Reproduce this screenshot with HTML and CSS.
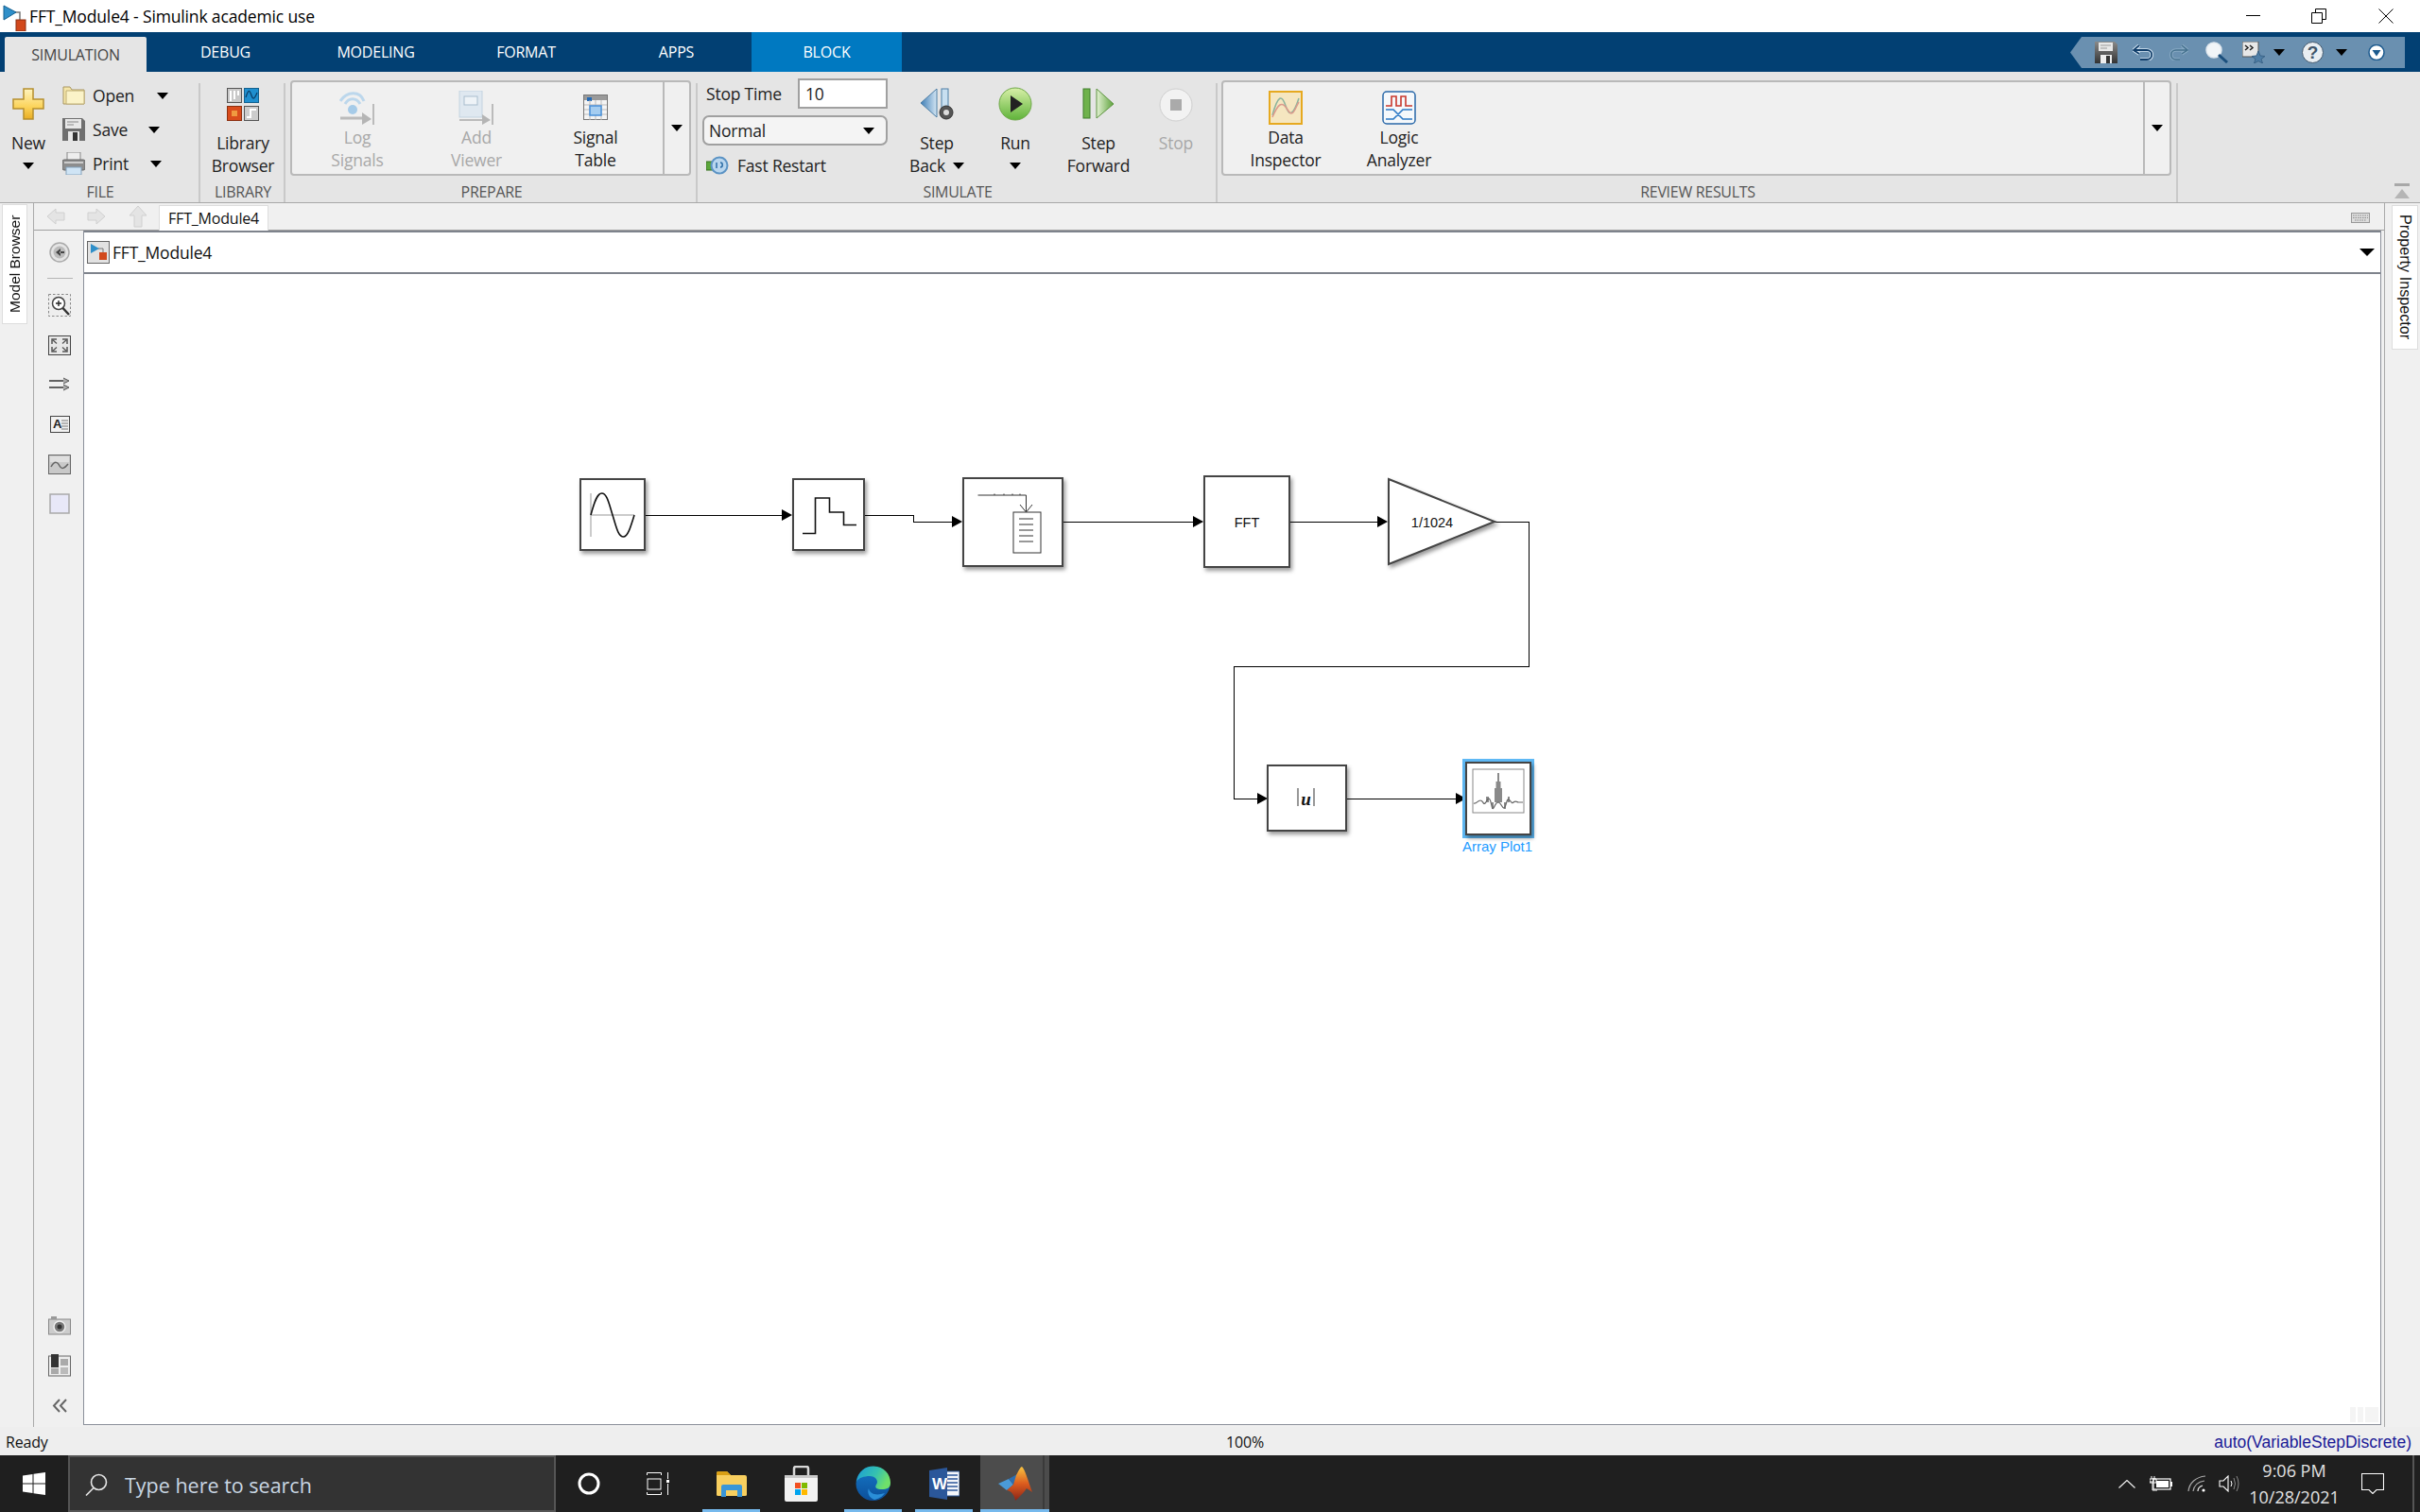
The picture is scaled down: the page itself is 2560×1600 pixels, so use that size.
FILE: index.html
```html
<!DOCTYPE html>
<html lang="en">
<head>
<meta charset="utf-8">
<title>FFT_Module4 - Simulink academic use</title>
<link rel="stylesheet" href="styles.css">
</head>
<body>
<div class="app">
  <header class="titlebar">
    <svg class="app-icon" width="26" height="28" viewBox="0 0 26 28"><path d="M8 8H19V16" fill="none" stroke="#777" stroke-width="1.5"/><path d="M2 1L15 8L2 16Z" fill="#2f8fc9" stroke="#17608f" stroke-width="1"/><rect x="15" y="16" width="10" height="12" fill="#d2491c" stroke="#8c2f10"/></svg>
    <span class="title-text">FFT_Module4 - Simulink academic use</span>
    <div class="winctl">
      <svg width="16" height="16" viewBox="0 0 16 16"><path d="M0 7.5H15" stroke="#000" stroke-width="1"/></svg>
      <svg class="restore" width="16" height="16" viewBox="0 0 16 16"><path d="M.5 4.5H11.5V15.5H.5ZM4.5 4V.5H15.5V11.5H12" fill="none" stroke="#000"/></svg>
      <svg class="close" width="16" height="16" viewBox="0 0 16 16"><path d="M.5.5L15.5 15.5M15.5.5L.5 15.5" stroke="#000"/></svg>
    </div>
  </header>

  <nav class="tabbar">
    <div class="tab active">SIMULATION</div>
    <div class="tab">DEBUG</div>
    <div class="tab">MODELING</div>
    <div class="tab">FORMAT</div>
    <div class="tab">APPS</div>
    <div class="tab block">BLOCK</div>
    <div class="quick">
      <svg width="24" height="23" viewBox="0 0 24 23"><defs><linearGradient id="fl" x1="0" y1="0" x2="0" y2="1"><stop offset="0" stop-color="#8a8a8a"/><stop offset="1" stop-color="#333"/></linearGradient></defs><path d="M0 0H21L24 3V23H0Z" fill="url(#fl)"/><rect x="4" y="1" width="15" height="9" fill="#e8e8e8"/><path d="M6 4H17M6 7H13" stroke="#999"/><rect x="6" y="14" width="12" height="9" fill="#eee"/><rect x="12" y="15" width="4" height="8" fill="#333"/></svg>
      <svg width="22" height="17" viewBox="0 0 22 17"><path d="M7 1L1 6L7 10M1 6H15C22 6 22 16 15 16H8" fill="none" stroke="#d8e8f5" stroke-width="3.6"/><path d="M7 1L1 6L7 10M1 6H15C22 6 22 16 15 16H8" fill="none" stroke="#123f6b" stroke-width="1.8"/></svg>
      <svg width="21" height="17" viewBox="0 0 21 17"><path d="M14 1L20 6L14 10M20 6H8C1 6 1 16 8 16H12" fill="none" stroke="#88a9c3" stroke-width="3.6"/><path d="M14 1L20 6L14 10M20 6H8C1 6 1 16 8 16H12" fill="none" stroke="#46728f" stroke-width="1.5"/></svg>
      <svg class="q-search" width="24" height="23" viewBox="0 0 24 23"><circle cx="9" cy="9" r="8" fill="#f1f5f8" stroke="#dfe7ee" stroke-width="1.5"/><path d="M14 14L23 22" stroke="#1b4f7c" stroke-width="3"/></svg>
      <svg class="q-short" width="24" height="23" viewBox="0 0 24 23"><rect x="0" y="0" width="17" height="16" fill="#e8e8e8" stroke="#555"/><path d="M3 4L6 6.5L3 9M8 4L11 6.5L8 9" fill="none" stroke="#222" stroke-width="1.5"/><path d="M17 10L19 15L24 15.5L20 18.5L21.5 23L17 20.5L12.5 23L14 18.5L10 15.5L15 15Z" fill="#4f7ea6" stroke="#3a6387"/></svg>
      <span class="caret q-c1"></span>
      <svg class="q-help" width="23" height="23" viewBox="0 0 23 23"><circle cx="11.5" cy="11.5" r="11" fill="#e9eef2" stroke="#40566b"/><text class="help-q" x="11.5" y="18">?</text></svg>
      <span class="caret q-c2"></span>
      <svg class="q-down" width="18" height="17" viewBox="0 0 18 17"><circle cx="9" cy="8.5" r="8" fill="#fff" stroke="#1c5a8e" stroke-width="1.5"/><path d="M4.5 6H13.5L9 12.5Z" fill="#1c5a8e"/></svg>
    </div>
  </nav>

  <section class="ribbon">
    <div class="group g-file">
      <div class="group-body">
        <div class="tool t-new">
          <div class="tool-icon"><svg width="34" height="34" viewBox="0 0 34 34"><defs><linearGradient id="pl" x1="0" y1="0" x2="0" y2="1"><stop offset="0" stop-color="#fff4bf"/><stop offset=".6" stop-color="#fbd35a"/><stop offset="1" stop-color="#e9ad24"/></linearGradient></defs><path d="M12 1H22V12H33V22H22V33H12V22H1V12H12Z" fill="url(#pl)" stroke="#b58f2e" stroke-width="1.5"/></svg></div>
          <div class="tool-line">New</div>
          <div class="tool-line"><span class="caret"></span></div>
        </div>
        <div class="file-list">
          <div class="file-row r-open"><svg width="24" height="20" viewBox="0 0 24 20"><path d="M1 1H8L10 4H23V19H1Z" fill="#f5e6a9" stroke="#a89560"/><path d="M4 5H23V19H4Z" fill="#fbf3c8" stroke="#bfae74"/></svg><span>Open</span><span class="caret"></span></div>
          <div class="file-row r-save"><svg width="24" height="24" viewBox="0 0 24 24"><path d="M0 0H21L24 3V24H0Z" fill="#6f6f6f"/><rect x="3" y="1" width="17" height="10" fill="#e8e8e8"/><path d="M5 4H17M5 7H12" stroke="#888"/><rect x="6" y="14" width="12" height="10" fill="#e8e8e8"/><rect x="11" y="15" width="5" height="9" fill="#333"/></svg><span>Save</span><span class="caret"></span></div>
          <div class="file-row r-print"><svg width="24" height="24" viewBox="0 0 24 24"><rect x="5" y="0" width="14" height="9" fill="#eee" stroke="#888"/><rect x="0" y="8" width="24" height="11" rx="2" fill="#8d8d8d" stroke="#666"/><rect x="2" y="10" width="20" height="2" fill="#ccc"/><rect x="4" y="16" width="16" height="8" fill="#cfe4f5" stroke="#86a4bd"/></svg><span>Print</span><span class="caret"></span></div>
        </div>
      </div>
      <div class="group-label">FILE</div>
    </div>

    <div class="group g-lib">
      <div class="group-body center">
        <div class="tool">
          <div class="tool-icon"><svg width="34" height="35" viewBox="0 0 34 35"><rect x=".5" y=".5" width="15" height="15" fill="#c8c8c8" stroke="#555"/><path d="M4 14V3M8 12V3M12 8V3" stroke="#fff" stroke-width="2"/><rect x="18.5" y=".5" width="15" height="15" fill="#1f8fcf" stroke="#14618e"/><path d="M20 10C23 1 24 2 26 8S30 10 32 5" fill="none" stroke="#0b3d66" stroke-width="1.2"/><rect x=".5" y="19.5" width="15" height="15" fill="#d94c1c" stroke="#8c2f10"/><rect x="5" y="24" width="6" height="6" fill="#f09a40"/><rect x="18.5" y="19.5" width="15" height="15" fill="#ccc" stroke="#555"/><path d="M21 31H25V23H31" fill="none" stroke="#fff" stroke-width="2"/></svg></div>
          <div class="tool-line">Library</div>
          <div class="tool-line">Browser</div>
        </div>
      </div>
      <div class="group-label">LIBRARY</div>
    </div>

    <div class="group g-prep">
      <div class="gallery gal-prep">
        <div class="gal-items">
          <div class="gtool disabled">
            <div class="gtool-icon"><svg width="38" height="36" viewBox="0 0 38 36"><path d="M1 11C8 0 22 0 26 11M6 14C10 7 18 7 22 14" fill="none" stroke="#bcd7ec" stroke-width="3"/><circle cx="14" cy="20" r="5" fill="#a6cbe8"/><path d="M1 29H25" stroke="#bbb" stroke-width="3"/><path d="M24 23L34 30L24 36Z" fill="#b5b5b5"/><path d="M36 14V36" stroke="#bbb" stroke-width="2"/></svg></div>
            <div class="tool-line">Log</div><div class="tool-line">Signals</div>
          </div>
          <div class="gtool disabled">
            <div class="gtool-icon"><svg width="38" height="36" viewBox="0 0 38 36"><rect x="1" y="0" width="24" height="28" fill="#dfe8f0" stroke="#c3d3e0"/><rect x="6" y="6" width="14" height="9" fill="#eef3f7" stroke="#a9bdcd"/><path d="M1 31H27" stroke="#bbb" stroke-width="2"/><path d="M25 25L34 31L25 36Z" fill="#b5b5b5"/><path d="M36 14V36" stroke="#bbb" stroke-width="2"/></svg></div>
            <div class="tool-line">Add</div><div class="tool-line">Viewer</div>
          </div>
          <div class="gtool">
            <div class="gtool-icon st-icon"><svg width="26" height="28" viewBox="0 0 26 28"><rect x=".5" y=".5" width="25" height="26" fill="#f4f4f4" stroke="#777"/><rect x="1" y="1" width="24" height="5" fill="#9a9a9a"/><rect x="4" y="3" width="5" height="4" fill="#2369b5"/><path d="M1 11H25M1 16H25M1 21H25M7 6V27M13 6V27M19 6V27" stroke="#bbb"/><rect x="7" y="12" width="12" height="10" fill="#a5cdf0" stroke="#4a90d9" stroke-width="1.5"/></svg></div>
            <div class="tool-line">Signal</div><div class="tool-line">Table</div>
          </div>
        </div>
        <div class="gal-more"><span class="caret"></span></div>
      </div>
      <div class="group-label">PREPARE</div>
    </div>

    <div class="group g-sim">
      <div class="group-body">
        <div class="sim-form">
          <div class="stop-row"><span>Stop Time</span><div class="stop-input">10</div></div>
          <div class="mode-select"><span>Normal</span><span class="caret"></span></div>
          <div class="fast-row"><svg width="24" height="20" viewBox="0 0 24 20"><rect x="0" y="6" width="8" height="9" fill="#5ba63a" stroke="#35701f"/><circle cx="14" cy="10" r="8.5" fill="#b9d6ee" stroke="#5b93c4" stroke-width="2"/><path d="M11 7V13M15 7C18 7 18 12 15 12" fill="none" stroke="#2e6ea6" stroke-width="1.5"/></svg><span>Fast Restart</span></div>
        </div>
        <div class="tool t-sb">
          <div class="tool-icon"><svg width="36" height="34" viewBox="0 0 36 34"><defs><linearGradient id="sb" x1="0" y1="0" x2="1" y2="0"><stop offset="0" stop-color="#3e7eb6"/><stop offset="1" stop-color="#d3e5f3"/></linearGradient></defs><path d="M18 1V31L1 16Z" fill="url(#sb)" stroke="#4d7ea5"/><rect x="23" y="1" width="7" height="27" fill="#c8dff0" stroke="#4d7ea5"/><circle cx="28" cy="26" r="7" fill="#555" stroke="#333"/><circle cx="28" cy="26" r="3" fill="#ddd"/></svg></div>
          <div class="tool-line">Step</div>
          <div class="tool-line back-line">Back<span class="caret"></span></div>
        </div>
        <div class="tool t-run">
          <div class="tool-icon run-i"><svg width="36" height="36" viewBox="0 0 36 36"><defs><linearGradient id="rn" x1="0" y1="0" x2="0" y2="1"><stop offset="0" stop-color="#d8f0a8"/><stop offset="1" stop-color="#5fb33a"/></linearGradient></defs><circle cx="18" cy="18" r="17" fill="url(#rn)" stroke="#6fa84a"/><path d="M13 9L26 18L13 27Z" fill="#222"/></svg></div>
          <div class="tool-line">Run</div>
          <div class="tool-line"><span class="caret"></span></div>
        </div>
        <div class="tool t-sf">
          <div class="tool-icon"><svg width="34" height="33" viewBox="0 0 34 33"><defs><linearGradient id="sf" x1="0" y1="0" x2="1" y2="0"><stop offset="0" stop-color="#e4f2d4"/><stop offset="1" stop-color="#5ea33c"/></linearGradient></defs><rect x="1" y="1" width="7" height="31" fill="#6fb24c" stroke="#3f7f2b"/><path d="M15 1L33 17L15 32Z" fill="url(#sf)" stroke="#5d9340"/></svg></div>
          <div class="tool-line">Step</div>
          <div class="tool-line">Forward</div>
        </div>
        <div class="tool t-stop disabled">
          <div class="tool-icon"><svg width="36" height="36" viewBox="0 0 36 36"><circle cx="18" cy="18" r="17" fill="#f2f2f2" stroke="#cfcfcf"/><rect x="12" y="12" width="12" height="12" fill="#aaa"/></svg></div>
          <div class="tool-line">Stop</div>
        </div>
      </div>
      <div class="group-label">SIMULATE</div>
    </div>

    <div class="group g-rev">
      <div class="gallery gal-rev">
        <div class="gal-items">
          <div class="gtool rtool">
            <div class="gtool-icon"><svg width="36" height="36" viewBox="0 0 36 36"><rect x="1" y="1" width="34" height="34" fill="#f5e6c0" stroke="#e6a920" stroke-width="2"/><path d="M4 26C10 4 14 4 18 16S26 26 32 8" fill="none" stroke="#8bb39c" stroke-width="1.5"/><path d="M4 28C10 14 14 10 20 20S28 18 32 12" fill="none" stroke="#dc9a8c" stroke-width="1.5"/></svg></div>
            <div class="tool-line">Data</div><div class="tool-line">Inspector</div>
          </div>
          <div class="gtool rtool">
            <div class="gtool-icon"><svg width="36" height="36" viewBox="0 0 36 36"><rect x="1" y="1" width="34" height="34" rx="4" fill="#f5f8fb" stroke="#2867a8" stroke-width="1.5"/><path d="M4 16H10V6H15V16H20V6H25V16H32" fill="none" stroke="#c8372d" stroke-width="1.6"/><path d="M4 20H12L22 30H32M4 30H12L22 20H32" fill="none" stroke="#2b78c5" stroke-width="1.6"/></svg></div>
            <div class="tool-line">Logic</div><div class="tool-line">Analyzer</div>
          </div>
        </div>
        <div class="gal-more"><span class="caret"></span></div>
      </div>
      <div class="group-label">REVIEW RESULTS</div>
    </div>

    <div class="ribbon-rest">
      <svg width="16" height="16" viewBox="0 0 16 16"><rect y="0" width="16" height="3" fill="#a8a8a8"/><path d="M0 16L8 6L16 16Z" fill="#b5b5b5"/></svg>
    </div>
  </section>

  <main class="workspace">
    <aside class="dock-left"><div class="side-tab model-tab">Model Browser</div></aside>
    <div class="main">
      <div class="tabstrip">
        <svg class="nav-a" width="20" height="20" viewBox="0 0 20 20"><path d="M1 10L10 2V6H19V14H10V18Z" fill="#e4e4e4" stroke="#d0d0d0"/></svg>
        <svg class="nav-b" width="20" height="20" viewBox="0 0 20 20"><path d="M19 10L10 2V6H1V14H10V18Z" fill="#e4e4e4" stroke="#d0d0d0"/></svg>
        <svg class="nav-c" width="20" height="24" viewBox="0 0 20 24"><path d="M10 1L19 11H14V23H6V11H1Z" fill="#e4e4e4" stroke="#d0d0d0"/></svg>
        <div class="model-tabitem">FFT_Module4</div>
        <svg class="kbd" width="20" height="11" viewBox="0 0 20 11"><rect x=".5" y=".5" width="19" height="10" fill="#ddd" stroke="#999"/><path d="M2 3H18M2 5.5H18M4 8H16" stroke="#8a8a8a" stroke-dasharray="1.5 1"/></svg>
      </div>
      <div class="editor">
        <div class="toolcol">
          <div class="slot"><svg width="22" height="22" viewBox="0 0 22 22"><circle cx="11" cy="11" r="10" fill="#e4e4e4" stroke="#aaa" stroke-width="1.5"/><circle cx="11" cy="11" r="6.5" fill="#bbb"/><path d="M12 7L7 11L12 15ZM11 10H16V12H11Z" fill="#444"/></svg></div>
          <div class="sep"></div>
          <div class="slot"><svg width="24" height="24" viewBox="0 0 24 24"><rect x=".5" y=".5" width="23" height="23" fill="#eee" stroke="#888" stroke-dasharray="2.5 2"/><circle cx="11" cy="10" r="6.5" fill="#fff" stroke="#444" stroke-width="1.5"/><path d="M8 10H14M11 7V13" stroke="#222" stroke-width="1.4"/><path d="M15.5 15L22 22" stroke="#333" stroke-width="2.5"/></svg></div>
          <div class="slot"><svg width="24" height="21" viewBox="0 0 24 21"><rect x=".5" y=".5" width="23" height="20" fill="#e8e8e8" stroke="#444"/><path d="M4 9V4H9M15 4H20V9M4 12V17H9M15 17H20V12" fill="none" stroke="#555" stroke-width="1.5"/><path d="M4.5 4.5L9 8.5M19.5 4.5L15 8.5M4.5 16.5L9 12.5M19.5 16.5L15 12.5" stroke="#555" stroke-width="1.3"/></svg></div>
          <div class="slot"><svg width="22" height="16" viewBox="0 0 22 16"><path d="M0 4H17M0 11H17" stroke="#333" stroke-width="1.5"/><path d="M15 1L21 4L15 7M15 8L21 11L15 14" fill="#aaa" stroke="#555"/></svg></div>
          <div class="slot"><svg width="21" height="18" viewBox="0 0 21 18"><rect x=".5" y=".5" width="20" height="17" fill="#f2f2f2" stroke="#444"/><text class="a-txt" x="3" y="13">A</text><path d="M12 5H19M12 8H19M12 11H19M12 14H19" stroke="#777"/></svg></div>
          <div class="slot"><svg width="24" height="21" viewBox="0 0 24 21"><rect x=".5" y=".5" width="23" height="20" fill="#c9c9c9" stroke="#666"/><rect x="2" y="2" width="20" height="6" fill="#dfdfdf"/><path d="M3 13C7 6 10 8 12 12S17 15 21 10" fill="none" stroke="#666" stroke-width="1.5"/></svg></div>
          <div class="slot"><svg width="22" height="22" viewBox="0 0 22 22"><rect x="1" y="1" width="20" height="20" fill="#e8e8f8" stroke="#a9a9a9" stroke-width="1.5"/></svg></div>
          <div class="slot slot-push"><svg width="24" height="20" viewBox="0 0 24 20"><rect x=".5" y="3" width="23" height="16" fill="#ccc" stroke="#888"/><rect x="3" y="0" width="6" height="3" fill="#999"/><circle cx="12" cy="11" r="6" fill="#777" stroke="#eee" stroke-width="1.5"/><circle cx="12" cy="11" r="2.5" fill="#333"/></svg></div>
          <div class="slot"><svg width="24" height="24" viewBox="0 0 24 24"><rect x=".5" y="2" width="23" height="21" fill="#eee" stroke="#666"/><rect x="3" y="0" width="8" height="14" fill="#333"/><rect x="13" y="5" width="8" height="7" fill="#aaa"/><rect x="13" y="14" width="8" height="7" fill="#bbb"/><rect x="3" y="15" width="8" height="6" fill="#aaa"/></svg></div>
          <div class="slot"><svg width="16" height="15" viewBox="0 0 16 15"><path d="M8 1L2 7.5L8 14M15 1L9 7.5L15 14" fill="none" stroke="#666" stroke-width="2"/></svg></div>
        </div>
        <div class="viewport">
          <div class="breadcrumb">
            <svg class="crumb-icon" width="24" height="24" viewBox="0 0 24 24"><rect x=".5" y=".5" width="23" height="23" fill="#e2e2e2" stroke="#666"/><path d="M4 3L13 8L4 13Z" fill="#2f8fc9"/><path d="M12 8H17V12" fill="none" stroke="#777"/><rect x="13" y="12" width="8" height="8" fill="#d2491c"/></svg>
            <span class="crumb-text">FFT_Module4</span>
            <span class="caret crumb-caret"></span>
          </div>
          <div class="canvas">
            <svg class="diagram" width="2430" height="1218" viewBox="89 290 2430 1218">
              <g class="wires">
                <path d="M682 545H830M915 545H966V552H1010M1124 552H1265M1364 552H1460M1581 552H1617V705H1305V845H1333M1425 845H1543"/>
              </g>
              <g class="heads">
                <path d="M827 539L838 545L827 551ZM1007 546L1018 552L1007 558ZM1262 546L1273 552L1262 558ZM1457 546L1468 552L1457 558ZM1330 839L1341 845L1330 851ZM1540 839L1551 845L1540 851Z"/>
              </g>
              <rect class="blk" x="614" y="507" width="68" height="75"/>
              <rect class="blk" x="839" y="507" width="75" height="75"/>
              <rect class="blk" x="1019" y="506" width="105" height="93"/>
              <rect class="blk" x="1274" y="504" width="90" height="96"/>
              <path class="blk" d="M1469 507L1581 552L1469 597Z"/>
              <rect class="blk" x="1341" y="810" width="83" height="69"/>
              <rect class="sel" x="1547" y="803" width="76" height="84"/>
              <rect class="blk" x="1551" y="807" width="68" height="76"/>

              <path class="axis" d="M625 522V568M625 545H671"/>
              <path class="ink" d="M625 545C629 530 632 522 636.5 522C642 522 644 532 648 545C652 558 654 568 659.5 568C664 568 667 558 671 545"/>
              <path class="ink" d="M849 564.5H862.5V527H877.5V542H892.5V555.5H906"/>
              <path class="thin" d="M1034.5 524H1085.5V541M1079 534L1085.5 542L1092 534M1052 522.5V524M1062 522.5V524M1071 522.5V524M1079 522.5V524"/>
              <rect class="thin doc" x="1072" y="542" width="29" height="43"/>
              <path class="thin" d="M1078 549H1093M1078 555H1093M1078 561H1093M1078 567H1093M1078 573H1093"/>
              <text class="lbl" x="1319" y="558">FFT</text>
              <text class="lbl" x="1515" y="558">1/1024</text>
              <path class="thin" d="M1373 834V853M1390 834V853"/>
              <text class="abs-u" x="1381.5" y="852">u</text>
              <rect class="frame" x="1558" y="814" width="54" height="46"/>
              <path class="peak" d="M1581 849V834H1582.5V827H1584V818H1586V827H1587.5V834H1589V849Z"/>
              <path class="peak" d="M1572 849V843H1575V849ZM1595 849V843H1597V849ZM1578 849V856H1580V849ZM1591 849V856H1593V849Z"/>
              <path class="ripple" d="M1559 850C1562 851 1563 847 1566 847S1569 852 1571 850S1574 843 1576 846S1578 858 1580 855S1582 849 1585 849S1590 858 1592 854S1594 845 1596 846S1599 851 1601 849S1604 848 1606 849H1611"/>
              <text class="sel-lbl" x="1584" y="901">Array Plot1</text>
            </svg>
            <div class="corner-marks"><span></span><span></span><span class="wide"></span></div>
          </div>
        </div>
      </div>
    </div>
    <aside class="dock-right"><div class="side-tab prop-tab">Property Inspector</div></aside>
  </main>

  <footer class="status">
    <span class="st-ready">Ready</span>
    <span class="st-zoom">100%</span>
    <span class="st-solver">auto(VariableStepDiscrete)</span>
  </footer>

  <div class="taskbar">
    <div class="start"><svg width="24" height="24" viewBox="0 0 24 24"><path d="M0 3.5L10.5 2V11.5H0ZM11.5 1.8L24 0V11.5H11.5ZM0 12.5H10.5V22L0 20.5ZM11.5 12.5H24V24L11.5 22.2Z" fill="#fff"/></svg></div>
    <div class="searchbox">
      <svg width="24" height="24" viewBox="0 0 24 24"><circle cx="14.5" cy="9.5" r="8" fill="none" stroke="#e6e6e6" stroke-width="1.6"/><path d="M9 15.5L1 23.5" stroke="#e6e6e6" stroke-width="1.6"/></svg>
      <span>Type here to search</span>
    </div>
    <div class="tb-sys tb-cortana"><svg width="24" height="24" viewBox="0 0 24 24"><circle cx="12" cy="12" r="10" fill="none" stroke="#fff" stroke-width="3"/></svg></div>
    <div class="tb-sys tb-view"><svg width="24" height="24" viewBox="0 0 24 24"><path d="M.5 3V.5H15.5V3M.5 21V23.5H15.5V21" fill="none" stroke="#fff" stroke-width="1"/><rect x="1" y="7" width="14" height="11" fill="none" stroke="#fff"/><path d="M22.5 0V7M22.5 12V24" stroke="#fff"/><rect x="21" y="8" width="3" height="3" fill="#fff"/></svg></div>
    <div class="tb t-exp on"><svg width="32" height="27" viewBox="0 0 32 27"><path d="M0 2Q0 0 2 0H11L15 4H30Q32 4 32 6V25Q32 26 30 26H2Q0 26 0 25Z" fill="#f8cf5f"/><path d="M0 2Q0 0 2 0H11L15 4H0Z" fill="#d99f14"/><path d="M5 27V16Q5 14 7 14H25Q27 14 27 16V27H22V20H10V27Z" fill="#3a96d8"/></svg></div>
    <div class="tb t-store"><svg width="35" height="38" viewBox="0 0 35 38"><path d="M10 12V3Q10 1 12 1H23Q25 1 25 3V12" fill="none" stroke="#d8d8d8" stroke-width="2.5"/><path d="M0 10H35V36Q35 38 33 38H2Q0 38 0 36Z" fill="#f2f2f2"/><rect y="10" width="35" height="3" fill="#c9c9c9"/><rect x="11" y="18" width="6" height="6" fill="#f25022"/><rect x="18" y="18" width="6" height="6" fill="#7fba00"/><rect x="11" y="25" width="6" height="6" fill="#00a4ef"/><rect x="18" y="25" width="6" height="6" fill="#ffb900"/></svg></div>
    <div class="tb t-edge on"><svg width="37" height="38" viewBox="0 0 37 38"><defs><linearGradient id="eg" x1="0" y1="0" x2="1" y2=".4"><stop offset="0" stop-color="#1a9cd8"/><stop offset=".6" stop-color="#35c1b0"/><stop offset="1" stop-color="#6fe06a"/></linearGradient><linearGradient id="eb" x1="0" y1="0" x2="0" y2="1"><stop offset="0" stop-color="#1578c8"/><stop offset="1" stop-color="#0c4f9a"/></linearGradient></defs><circle cx="18.500" cy="19" r="18" fill="url(#eb)"/><path d="M1 17C3 6 10 .5 19 .5C30 .5 37 9 37 18C37 24 33 25 28 25C22 25 20 23 22 20C25 16 21 11 15 11C9 11 3 13 1 17Z" fill="url(#eg)"/><path d="M14 24C15 30 22 32 31 29C27 35 20 36 20 36C14 34 12 28 14 24Z" fill="#2a8ed8"/></svg></div>
    <div class="tb t-word on"><svg width="32" height="34" viewBox="0 0 32 34"><rect x="14" y="4" width="18" height="26" fill="#f4f6fa"/><path d="M17 8H30M17 12H30M17 16H30M17 20H30M17 24H30" stroke="#2b579a" stroke-width="1.5"/><rect x="14" y="4" width="18" height="26" fill="none" stroke="#2b579a"/><path d="M0 3L19 0V34L0 31Z" fill="#2b579a"/><text class="w-txt" x="3" y="23">W</text></svg></div>
    <div class="tb t-mat on active-app"><svg width="36" height="36" viewBox="0 0 36 36"><defs><linearGradient id="mt" x1="0" y1="0" x2="0" y2="1"><stop offset="0" stop-color="#f9c440"/><stop offset=".5" stop-color="#dc5c1e"/><stop offset="1" stop-color="#8a2418"/></linearGradient></defs><path d="M0 18L11 13L16 19L9 25Z" fill="#4a9ad8"/><path d="M11 13L20 8L16 19Z" fill="#2c6eb0"/><path d="M19 9C22 3 24 0 25 0C28 2 32 16 36 27L30 23C28 26 22 33 18 36C17 30 14 26 9 25L16 19Z" fill="url(#mt)"/></svg><i class="split"></i></div>
    <div class="tray">
      <svg class="tr-chev" width="18" height="9" viewBox="0 0 18 9"><path d="M.5 8.500L9 .5L17.500 8.500" fill="none" stroke="#eee" stroke-width="1.2"/></svg>
      <svg class="tr-bat" width="24" height="16" viewBox="0 0 24 16"><rect x="4" y="3" width="18" height="11" fill="none" stroke="#fff" stroke-width="1.2"/><rect x="7" y="5" width="13" height="7" fill="#fff"/><rect x="22" y="6" width="2" height="5" fill="#fff"/><path d="M0 6H4V2M2 0V3M5 0V3M0 3H7V7H0ZM3 7V15H8" fill="none" stroke="#fff"/></svg>
      <svg class="tr-wifi" width="20" height="18" viewBox="0 0 20 18"><path d="M1 17C2 8 9 2 19 1M6 17C7 11 11 7 18 6" fill="none" stroke="#aaa" stroke-width="1.2"/><path d="M11 17C11 14 13 12 16 11" fill="none" stroke="#eee" stroke-width="1.2"/><circle cx="17" cy="16" r="1.6" fill="#fff"/></svg>
      <svg class="tr-vol" width="22" height="18" viewBox="0 0 22 18"><path d="M1 6H5L10 1V17L5 12H1Z" fill="none" stroke="#fff" stroke-width="1.1"/><path d="M13 6Q15 9 13 12" fill="none" stroke="#fff"/><path d="M16 3Q19 9 16 15M19 1Q23 9 19 17" fill="none" stroke="#888"/></svg>
      <div class="clock"><div>9:06 PM</div><div>10/28/2021</div></div>
      <svg class="tr-note" width="24" height="22" viewBox="0 0 24 22"><path d="M.5.5H23.500V17.500H16L12 21.500L8 17.500H.5Z" fill="none" stroke="#fff" stroke-width="1.100"/></svg>
      <i class="show-desk"></i>
    </div>
  </div>
</div>
</body>
</html>
```

FILE: styles.css
```css
* { box-sizing: border-box; }
html, body { margin: 0; padding: 0; }
body { width: 2560px; height: 1600px; overflow: hidden; background: #f0f0f0; color: #222; font-family: "Open Sans", "Noto Sans", sans-serif; font-size: 16px; }
svg { display: block; flex: none; }
.app { display: flex; flex-direction: column; width: 2560px; height: 1600px; }
.caret { display: inline-block; width: 0; height: 0; border-left: 6px solid transparent; border-right: 6px solid transparent; border-top: 7px solid #000; flex: none; }

/* title bar */
.titlebar { height: 34px; background: #fff; display: flex; align-items: center; padding-left: 2px; flex: none; }
.app-icon { margin-top: 4px; }
.title-text { margin-left: 3px; font-size: 17.5px; color: #000; letter-spacing: -0.15px; }
.winctl { margin-left: auto; display: flex; padding-right: 28px; gap: 53px; margin-top: -1px; }
.winctl .close { margin-left: 2px; }

/* tabs */
.tabbar { height: 42px; background: #024073; display: flex; padding-left: 5px; flex: none; position: relative; }
.tab { width: 159px; display: flex; align-items: center; justify-content: center; color: #fff; font-size: 16px; letter-spacing: -0.2px; }
.tab.active { width: 150px; margin: 5px 4px 0 0; background: #e5e5e5; color: #444; border-radius: 2px 2px 0 0; }
.tab.block { background: #0079c1; }
.quick { margin-left: auto; margin-right: 16px; margin-top: 5px; width: 354px; height: 33px; background: #6a90b0; clip-path: polygon(12px 0, 100% 0, 100% 100%, 12px 100%, 0 50%); display: flex; align-items: center; gap: 16px; padding-left: 26px; }
.q-search { margin-left: 2px; }
.q-short { margin-left: -1px; }
.q-c1 { margin-left: -7px; }
.q-help { margin-left: 2px; }
.q-c2 { margin-left: -3px; }
.q-down { margin-left: 6px; }
.help-q { font-family: "Liberation Sans", sans-serif; font-size: 19px; font-weight: 700; text-anchor: middle; fill: #40566b; }

/* ribbon */
.ribbon { height: 139px; background: #e5e5e5; border-bottom: 1px solid #a8a8a8; display: flex; flex: none; }
.group { display: flex; flex-direction: column; position: relative; flex: none; }
.group::after { content: ""; position: absolute; right: 0; top: 12px; bottom: 0; width: 2px; background: #c9c9c9; }
.g-file { width: 212px; }
.g-lib { width: 90px; }
.g-prep { width: 436px; }
.g-sim { width: 550px; }
.g-rev { width: 1016px; }
.ribbon-rest { flex: 1; display: flex; align-items: flex-end; justify-content: flex-end; padding: 0 11px 4px 0; }
.group-body { display: flex; flex: 1; min-height: 0; }
.group-body.center { justify-content: center; }
.group-label { height: 20px; flex: none; margin-top: auto; padding-bottom: 2px; display: flex; align-items: center; justify-content: center; font-size: 16px; color: #555; letter-spacing: -0.3px; }

.tool { display: flex; flex-direction: column; align-items: center; padding-top: 12px; font-size: 17.5px; letter-spacing: -0.2px; }
.tool-icon { height: 51px; padding-top: 5px; flex: none; }
.tool-line { height: 24px; line-height: 24px; flex: none; display: flex; align-items: center; justify-content: center; white-space: nowrap; }
.disabled { color: #a8a8a8; }
.run-i { padding-top: 4px; }

.t-new { width: 44px; margin-left: 8px; }
.file-list { margin-left: 14px; padding-top: 7px; display: flex; flex-direction: column; }
.file-row { height: 36px; display: flex; align-items: center; font-size: 17.5px; letter-spacing: -0.2px; }
.file-row span:not(.caret) { margin-left: 8px; }
.r-open .caret { margin-left: 24px; }
.r-save .caret { margin-left: 22px; }
.r-print .caret { margin-left: 23px; }

.g-prep, .g-rev { padding-top: 9px; }
.gallery { height: 101px; flex: none; border: 2px solid #b9b9b9; border-radius: 4px; background: #f0f0f0; display: flex; }
.gal-prep { margin-left: 5px; width: 424px; }
.gal-rev { margin-left: 4px; width: 1005px; }
.gal-items { flex: 1; display: flex; padding-left: 6px; border-right: 2px solid #b9b9b9; }
.gal-more { width: 26px; flex: none; display: flex; align-items: center; justify-content: center; }
.gtool { width: 126px; display: flex; flex-direction: column; align-items: center; font-size: 17.5px; letter-spacing: -0.2px; }
.rtool { width: 120px; }
.gtool-icon { height: 46px; padding-top: 9px; flex: none; }
.st-icon { padding-top: 13px; }

.sim-form { width: 196px; margin-left: 5px; padding-top: 7px; flex: none; display: flex; flex-direction: column; font-size: 17.5px; letter-spacing: -0.2px; }
.stop-row { height: 32px; display: flex; align-items: center; justify-content: space-between; padding-left: 4px; }
.stop-input { width: 95px; height: 32px; background: #fff; border: 2px solid #a0a0a0; display: flex; align-items: center; padding-left: 6px; }
.mode-select { margin-top: 7px; height: 32px; background: #f4f4f4; border: 2px solid #a0a0a0; border-radius: 7px; display: flex; align-items: center; justify-content: space-between; padding: 0 12px 0 5px; }
.fast-row { margin-top: 9px; height: 24px; display: flex; align-items: center; padding-left: 4px; }
.fast-row span { margin-left: 9px; }
.t-sb { width: 82px; margin-left: 11px; }
.back-line .caret { margin-left: 8px; }
.t-run { width: 84px; }
.t-sf { width: 92px; }
.t-stop { width: 72px; }

/* workspace */
.workspace { flex: 1; display: flex; min-height: 0; }
.dock-left { width: 36px; border-right: 1px solid #aaa; flex: none; padding: 1px 0 0 2px; background: #f0f0f0; }
.side-tab { background: #fff; border: 1px solid #ddd; font-family: "Liberation Sans", sans-serif; color: #111; writing-mode: vertical-rl; display: flex; align-items: center; justify-content: center; }
.model-tab { width: 27px; height: 127px; transform: rotate(180deg); font-size: 15.5px; }
.prop-tab { width: 28px; height: 153px; margin: 2px 0 0 7px; font-size: 16.2px; }
.main { flex: 1; min-width: 0; display: flex; flex-direction: column; padding-bottom: 2px; }
.dock-right { width: 38px; border-left: 1px solid #aaa; flex: none; }
.tabstrip { height: 29px; flex: none; display: flex; align-items: flex-end; border-bottom: 1px solid #a0a0a0; padding-left: 13px; position: relative; }
.nav-a { margin-bottom: 4px; }
.nav-b { margin: 0 0 4px 23px; }
.nav-c { margin: 0 0 2px 24px; }
.model-tabitem { margin-left: 12px; width: 116px; height: 27px; margin-bottom: -1px; background: #fff; border: 1px solid #ddd; border-bottom: 0; display: flex; align-items: center; justify-content: center; font-size: 16px; letter-spacing: -0.2px; color: #111; }
.kbd { margin: 0 15px 7px auto; }
.editor { flex: 1; display: flex; min-height: 0; }
.toolcol { width: 52px; flex: none; display: flex; flex-direction: column; padding: 2px 0 0 2px; }
.slot { height: 42px; flex: none; display: flex; align-items: center; justify-content: center; }
.slot-push { margin-top: auto; }
.sep { height: 1px; margin: 6px 11px 7px 12px; background: #b5b5b5; flex: none; }
.viewport { width: 2431px; flex: none; display: flex; flex-direction: column; border-left: 1px solid #8a8f99; border-right: 1px solid #8a8f99; border-bottom: 1px solid #8a8f99; background: #fff; }
.breadcrumb { height: 46px; flex: none; border-top: 2px solid #7e838c; border-bottom: 2px solid #7e838c; background: #fff; display: flex; align-items: center; padding-left: 3px; }
.crumb-text { margin-left: 3px; font-size: 17.5px; letter-spacing: -0.2px; color: #111; }
.crumb-caret { margin: 0 6px 0 auto; border-left-width: 8px; border-right-width: 8px; border-top-width: 8px; }
.canvas { flex: 1; position: relative; overflow: hidden; background: #fff; }
.diagram { position: absolute; left: 0; top: 0; }
.corner-marks { position: absolute; right: 2px; bottom: 2px; display: flex; gap: 2px; }
.corner-marks span { width: 6px; height: 16px; background: #f4f4f4; }
.corner-marks .wide { width: 14px; }

/* diagram */
.wires path { fill: none; stroke: #000; stroke-width: 1; shape-rendering: crispEdges; }
.heads path { fill: #000; }
.blk { fill: #fff; stroke: #444; stroke-width: 2; filter: drop-shadow(2px 3px 2px rgba(0,0,0,.4)); }
.sel { fill: #5fb9f5; }
.axis { fill: none; stroke: #bbb; stroke-width: 1.5; }
.ink { fill: none; stroke: #111; stroke-width: 1.6; }
.thin { fill: none; stroke: #333; stroke-width: 1; }
.doc { fill: #fff; }
.frame { fill: #fff; stroke: #888; stroke-width: 1; }
.peak { fill: #8a8a8a; }
.ripple { fill: none; stroke: #666; stroke-width: 1.2; }
.lbl { font-family: "Liberation Sans", sans-serif; font-size: 14.5px; text-anchor: middle; fill: #111; }
.abs-u { font-family: "Liberation Serif", serif; font-size: 19px; font-style: italic; font-weight: 700; text-anchor: middle; fill: #111; }
.sel-lbl { font-family: "Liberation Sans", sans-serif; font-size: 15px; text-anchor: middle; fill: #1e9bff; }
.a-txt { font-family: "Liberation Sans", sans-serif; font-size: 13px; font-weight: 700; fill: #222; }
.w-txt { font-family: "Liberation Sans", sans-serif; font-size: 17px; font-weight: 700; fill: #fff; }

/* status */
.status { height: 30px; flex: none; background: #eee; display: grid; grid-template-columns: 1278px 80px 1fr; align-items: center; padding-left: 6px; padding-right: 9px; padding-top: 2px; font-size: 16px; color: #111; letter-spacing: -0.2px; }
.st-zoom { text-align: center; margin-left: -14px; }
.st-solver { text-align: right; color: #1a1a96; font-family: "Liberation Sans", sans-serif; font-size: 17.5px; letter-spacing: 0; }

/* taskbar */
.taskbar { height: 60px; flex: none; background: #1f1f1f; display: flex; color: #fff; }
.start { width: 72px; display: flex; align-items: center; justify-content: center; flex: none; }
.searchbox { width: 516px; flex: none; background: #333; border: 2px solid #555; display: flex; align-items: center; padding-left: 16px; padding-top: 2px; color: #c9d6e2; font-size: 21.5px; }
.searchbox span { margin-left: 18px; }
.tb-sys { flex: none; display: flex; align-items: center; justify-content: center; }
.tb-cortana { width: 70px; }
.tb-view { width: 75px; }
.tb { width: 61px; flex: none; display: flex; align-items: center; justify-content: center; position: relative; }
.tb.on::after { content: ""; position: absolute; left: 0; right: 0; bottom: 0; height: 3px; background: #76b9ed; }
.t-exp { margin-left: 10px; }
.t-store { margin-left: 13px; }
.t-edge { margin-left: 15px; }
.t-word { margin-left: 14px; }
.t-mat { margin-left: 8px; width: 73px; }
.active-app { background: #4c4c4c; }
.split { position: absolute; right: 5px; top: 0; bottom: 0; width: 2px; background: #3a3a3a; }
.tray { margin-left: auto; display: flex; align-items: center; }
.tr-wifi { margin-left: 16px; }
.tr-bat { margin-left: 15px; }
.tr-vol { margin-left: 13px; }
.clock { width: 104px; margin-left: 6px; text-align: center; font-size: 18px; line-height: 28px; color: #e2e2e2; }
.tr-note { margin-left: 19px; }
.show-desk { display: block; width: 2px; height: 60px; margin-left: 30px; margin-right: 6px; background: #555; }
```
